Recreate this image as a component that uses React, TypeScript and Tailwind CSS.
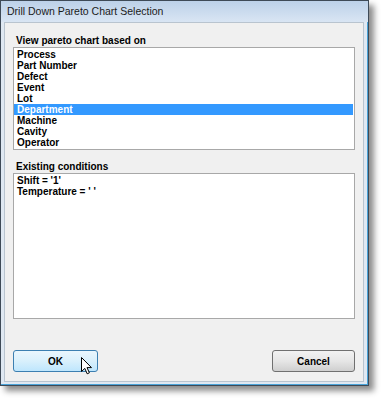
const items = ['Process', 'Part Number', 'Defect', 'Event', 'Lot', 'Department', 'Machine', 'Cavity', 'Operator']
const conditions = ["Shift = '1'", "Temperature = ' '"]

function Cursor() {
  return (
    <svg width="12" height="18" viewBox="0 0 12 18" className="absolute left-[67px] top-[6px]">
      <path
        d="M0.5 0.5 L0.5 14.5 L3.8 11.4 L6.2 16.8 L8.4 15.8 L6 10.6 L10.5 10.6 Z"
        fill="#fff"
        stroke="#000"
        strokeWidth="1"
        strokeLinejoin="round"
      />
    </svg>
  )
}

export default function App() {
  return (
    <div className="min-h-[400px] bg-white font-['Liberation_Sans',Arial,sans-serif]">
      <div className="flex h-[386px] w-[369px] flex-col border border-[#3e4a57] bg-[#dfe8f2] shadow-[5px_5px_6px_rgba(0,0,0,0.45)]">
        <div className="flex h-[21px] items-center bg-gradient-to-b from-[#bcd1e9] to-[#d9e5f3] pl-[6px] text-[10.5px] text-[#1b1b1b]">
          Drill Down Pareto Chart Selection
        </div>
        <div className="flex flex-1 flex-col border-r border-b border-[#4aa3d8] px-[3px] pb-[2px]">
          <div className="flex flex-1 flex-col border border-[#b9c4cf] bg-[#f0f0f0] px-[8px] pt-[12px] text-[10px] font-bold leading-[11px] text-black">
            <div className="h-[12px] pl-[3px]">View pareto chart based on</div>
            <div className="h-[103px] w-[342px] border border-[#a8a8a8] bg-white py-px pr-px">
              {items.map((it) => (
                <div
                  key={it}
                  className={`h-[11px] pl-[3px] ${it === 'Department' ? 'bg-[#3399ff] text-white' : ''}`}
                >
                  {it}
                </div>
              ))}
            </div>
            <div className="mt-[11px] h-[12px] pl-[3px]">Existing conditions</div>
            <div className="h-[146px] w-[342px] border border-[#a8a8a8] bg-white py-px">
              {conditions.map((c) => (
                <div key={c} className="h-[11px] pl-[3px]">
                  {c}
                </div>
              ))}
            </div>
            <div className="mt-[31px] flex w-[342px] justify-between">
              <div className="relative flex h-[22px] w-[85px] items-center justify-center rounded-[3px] border border-[#3c7fb1] bg-gradient-to-b from-[#eaf6fd] via-[#d9f0fc] to-[#bee6fd] text-[10px]">
                OK
                <Cursor />
              </div>
              <div className="flex h-[22px] w-[83px] items-center justify-center rounded-[3px] border border-[#707070] bg-gradient-to-b from-[#f2f2f2] via-[#e6e6e6] to-[#cfcfcf] text-[10px]">
                Cancel
              </div>
            </div>
          </div>
        </div>
      </div>
    </div>
  )
}
